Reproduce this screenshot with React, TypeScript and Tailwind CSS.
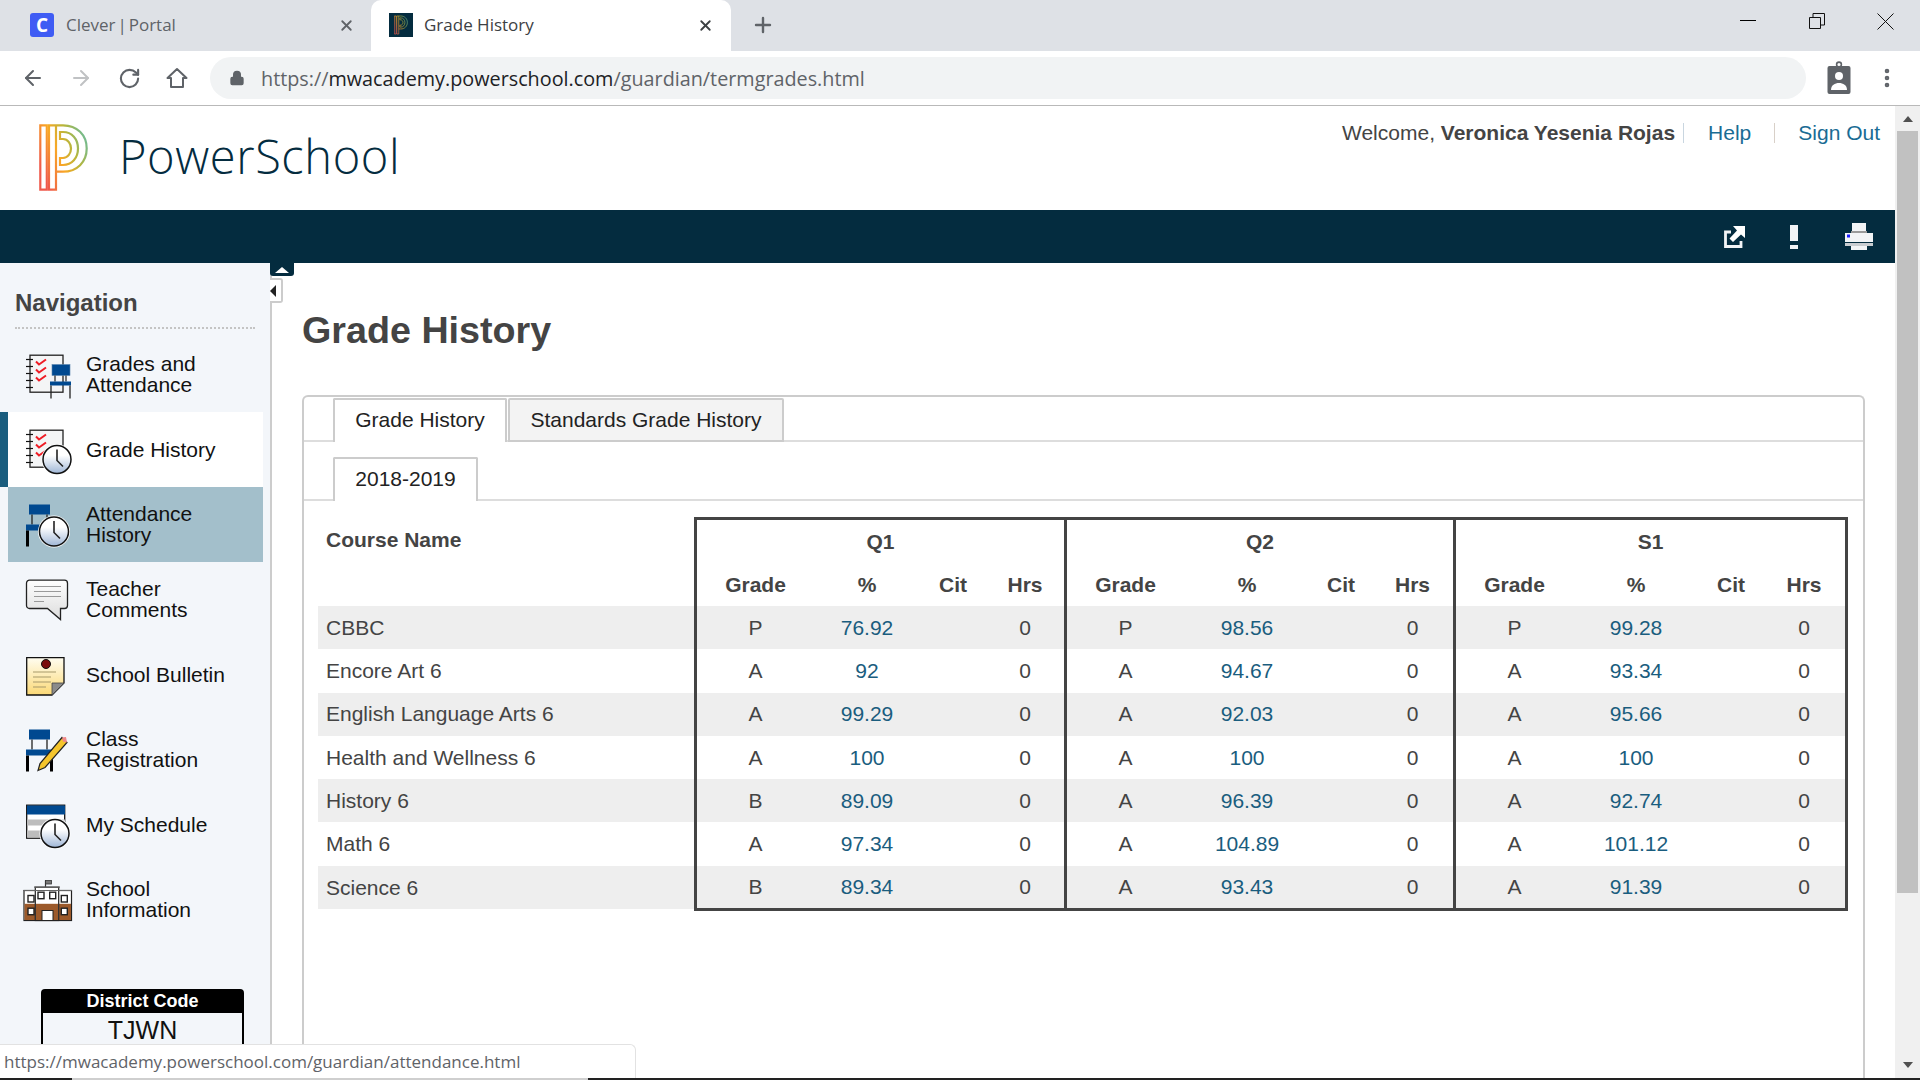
import React from 'react';
import { ArrowLeft, ArrowRight, RotateCw, Lock, X, Plus, EllipsisVertical } from 'lucide-react';

type Row = { name: string; cells: string[][] };

const rows: Row[] = [
  { name: 'CBBC', cells: [['P', '76.92'], ['P', '98.56'], ['P', '99.28']] },
  { name: 'Encore Art 6', cells: [['A', '92'], ['A', '94.67'], ['A', '93.34']] },
  { name: 'English Language Arts 6', cells: [['A', '99.29'], ['A', '92.03'], ['A', '95.66']] },
  { name: 'Health and Wellness 6', cells: [['A', '100'], ['A', '100'], ['A', '100']] },
  { name: 'History 6', cells: [['B', '89.09'], ['A', '96.39'], ['A', '92.74']] },
  { name: 'Math 6', cells: [['A', '97.34'], ['A', '104.89'], ['A', '101.12']] },
  { name: 'Science 6', cells: [['B', '89.34'], ['A', '93.43'], ['A', '91.39']] },
];

const colWidths = [376, 120, 106, 66, 78, 120, 126, 62, 81, 120, 126, 64, 85];

function SvgDefs() {
  return (
    <svg width="0" height="0" className="absolute">
      <defs>
        <linearGradient id="clockFill" x1="0" y1="0" x2="0" y2="1">
          <stop offset="0.35" stopColor="#ffffff" />
          <stop offset="1" stopColor="#9fb6d6" />
        </linearGradient>
        <linearGradient id="noteFill" x1="0" y1="0" x2="0" y2="1">
          <stop offset="0" stopColor="#fffdf0" />
          <stop offset="1" stopColor="#fbd976" />
        </linearGradient>
        <linearGradient id="bubbleFill" x1="0" y1="0" x2="0" y2="1">
          <stop offset="0" stopColor="#ffffff" />
          <stop offset="1" stopColor="#dcdcdc" />
        </linearGradient>
        <linearGradient id="logoFill" gradientUnits="userSpaceOnUse" x1="0" y1="40" x2="50" y2="20">
          <stop offset="0" stopColor="#ef5a4c" />
          <stop offset="0.4" stopColor="#f9a825" />
          <stop offset="0.7" stopColor="#b5b63c" />
          <stop offset="1" stopColor="#6fbb94" />
        </linearGradient>
      </defs>
    </svg>
  );
}

function Clock({ cx, cy, r, halo }: { cx: number; cy: number; r: number; halo?: boolean }) {
  return (
    <g>
      {halo && <circle cx={cx} cy={cy} r={r + 1.5} fill="#fff" />}
      <circle cx={cx} cy={cy} r={r} fill="url(#clockFill)" stroke="#111" strokeWidth="1.5" />
      <path d={`M${cx} ${cy - r + 4} V${cy + 1} L${cx + 6} ${cy + 7}`} fill="none" stroke="#222" strokeWidth="1.6" />
    </g>
  );
}

function Notebook() {
  return (
    <g>
      <rect x="4" y="0.7" width="33" height="37" fill="#f4f5f6" stroke="#222" strokeWidth="1.3" />
      {[5, 12, 19, 26, 33].map(y => (
        <path key={y} d={`M0 ${y}H7`} stroke="#111" strokeWidth="1.2" />
      ))}
      {[7, 15, 23].map(y => (
        <path key={y} d={`M10 ${y}l3 3l7 -5`} fill="none" stroke="#ee1c25" strokeWidth="2" />
      ))}
    </g>
  );
}

function IconBox({ children, dy = 2.5 }: { children: React.ReactNode; dy?: number }) {
  return (
    <svg width="46" height="46" viewBox={`0 ${-dy} 46 46`} className="shrink-0 overflow-visible">
      {children}
    </svg>
  );
}

const navIcons: Record<string, React.ReactNode> = {
  grades: (
    <IconBox>
      <Notebook />
      <rect x="26" y="10" width="18" height="11" fill="#004990" stroke="#5b86ad" strokeWidth="0.6" />
      <path d="M29 21v6M40 21v6" stroke="#222" strokeWidth="1.2" />
      <rect x="24" y="27" width="21" height="4" fill="#004990" />
      <path d="M25 31v13M44 31v13" stroke="#222" strokeWidth="1.3" />
    </IconBox>
  ),
  history: (
    <IconBox>
      <Notebook />
      <Clock cx={31} cy={30} r={14} halo />
    </IconBox>
  ),
  attendance: (
    <IconBox>
      <rect x="3" y="0" width="21" height="10" fill="#004990" />
      <path d="M6 10v10M21 10v10" stroke="#222" strokeWidth="1.3" />
      <rect x="0" y="20" width="24" height="6" fill="#004990" />
      <rect x="0" y="26" width="3" height="16" fill="#000" />
      <Clock cx={28} cy={27} r={14.5} halo />
    </IconBox>
  ),
  comments: (
    <IconBox>
      <path d="M3 0.7H38a3 3 0 0 1 3 3V26a3 3 0 0 1 -3 3H34V40L21 29H3a3 3 0 0 1 -3 -3V3.7a3 3 0 0 1 3 -3Z" fill="url(#bubbleFill)" stroke="#222" strokeWidth="1.3" transform="translate(0.5 0)" />
      <path d="M8 7H35M8 12H35M8 17H35M8 22H18" stroke="#999" strokeWidth="1.2" />
    </IconBox>
  ),
  bulletin: (
    <IconBox dy={5}>
      <path d="M0.7 0.7H38V26L26 38H0.7Z" fill="url(#noteFill)" stroke="#111" strokeWidth="1.3" />
      <path d="M38 26H26V38Z" fill="#8b8b8b" stroke="#444" strokeWidth="0.8" />
      <circle cx="20" cy="7" r="4.5" fill="#7a0d0d" stroke="#111" strokeWidth="1" />
      <path d="M7 15H30M7 20H25M7 25H25M7 30H20" stroke="#a89a6a" strokeWidth="1.2" />
    </IconBox>
  ),
  registration: (
    <IconBox>
      <rect x="3" y="0" width="21" height="10" fill="#004990" />
      <path d="M6 10v10M21 10v10" stroke="#222" strokeWidth="1.3" />
      <rect x="0" y="20" width="27" height="6" fill="#004990" />
      <rect x="0" y="26" width="3" height="16" fill="#000" />
      <rect x="24" y="26" width="3" height="16" fill="#000" />
      <path d="M36 8L41 13L19 38L12 41L14 34Z" fill="#f5c52c" stroke="#222" strokeWidth="1.2" />
      <path d="M36 8L40 7.5L41 13L37 12Z" fill="#f08a8a" />
    </IconBox>
  ),
  schedule: (
    <IconBox>
      <rect x="0.7" y="0.7" width="38" height="33" fill="#fff" stroke="#111" strokeWidth="1.3" />
      <rect x="1" y="1" width="38" height="9" fill="#004990" />
      <rect x="1" y="15" width="38" height="6" fill="#bdbdbd" />
      <rect x="1" y="26" width="38" height="7" fill="#bdbdbd" />
      <Clock cx={29} cy={29} r={14} halo />
    </IconBox>
  ),
  school: (
    <IconBox dy={0}>
      <path d="M19.500 3.500V10" stroke="#333" strokeWidth="1.2" />
      <rect x="19.500" y="3.500" width="6" height="3.500" fill="#777" stroke="#333" strokeWidth="0.8" />
      <rect x="-2" y="13.500" width="47.500" height="30" fill="#fff" stroke="#222" strokeWidth="1.2" />
      <rect x="-1.500" y="26.800" width="46.500" height="16.200" fill="#9c5a2b" />
      <rect x="9.300" y="10.200" width="23.400" height="33.300" fill="#fff" stroke="#222" strokeWidth="1.2" />
      <rect x="10" y="26.800" width="22" height="16.200" fill="#9c5a2b" />
      <path d="M-3 13.500H46M8 10.200H34" stroke="#666" strokeWidth="1.2" />
      {[[12, 15.2], [23.700, 15.2], [2, 18.500], [35.300, 18.500], [2, 31.200], [35.300, 31.200]].map(([x, y]) => (
        <rect key={`${x}-${y}`} x={x} y={y} width="6" height="6.500" fill="#fff" stroke="#222" strokeWidth="1.4" />
      ))}
      <rect x="16" y="33.500" width="11" height="10" fill="#fff" stroke="#222" strokeWidth="1" />
    </IconBox>
  ),
};

function NavItem({ icon, lines, state }: { icon: string; lines: string[]; state?: 'current' | 'hover' }) {
  const tone =
    state === 'current'
      ? 'border-[#1a5d7e] bg-white'
      : state === 'hover'
        ? 'border-transparent bg-[#a3bfcb]'
        : 'border-transparent';
  return (
    <div className={`flex h-[75px] w-[263px] items-center gap-[14px] border-l-[8px] bg-clip-padding pl-[18px] ${tone}`}>
      {navIcons[icon]}
      <div className={`text-[21px] leading-[21px] text-[#111] ${lines.length > 1 ? 'pb-[2px]' : ''}`}>
        {lines.map(l => (
          <div key={l}>{l}</div>
        ))}
      </div>
    </div>
  );
}

function Sidebar() {
  return (
    <aside className="relative h-full w-[272px] shrink-0 border-r-2 border-[#cccccc] bg-[#f3f6fa]">
      <div className="ml-[15px] flex h-[66px] w-[240px] items-end border-b-2 border-dotted border-[#c4c4c4] pb-[10px]">
        <h2 className="text-[24px] leading-[28px] font-bold text-[#444]">Navigation</h2>
      </div>
      <nav className="mt-[8px]">
        <NavItem icon="grades" lines={['Grades and', 'Attendance']} />
        <NavItem icon="history" lines={['Grade History']} state="current" />
        <NavItem icon="attendance" lines={['Attendance', 'History']} state="hover" />
        <NavItem icon="comments" lines={['Teacher', 'Comments']} />
        <NavItem icon="bulletin" lines={['School Bulletin']} />
        <NavItem icon="registration" lines={['Class', 'Registration']} />
        <NavItem icon="schedule" lines={['My Schedule']} />
        <NavItem icon="school" lines={['School', 'Information']} />
      </nav>
      <div className="mt-[52px] ml-[41px] w-[203px] rounded-t-[4px] border-2 border-black">
        <div className="h-[22px] bg-black text-center text-[18px] leading-[21px] font-bold text-white">District Code</div>
        <div className="pt-[2px] text-center text-[25px] leading-[30px] text-[#111]">TJWN</div>
        <div className="h-[30px]" />
      </div>
      {/* collapse handles */}
      <div className="absolute top-0 left-[270px] flex h-[13px] w-[24px] items-center justify-center rounded-b-[3px] bg-[#042c3f]">
        <div className="h-0 w-0 border-x-[7px] border-b-[6px] border-x-transparent border-b-white" />
      </div>
      <div className="absolute top-[15px] left-[270px] flex h-[25px] w-[13px] items-center justify-start rounded-r-[3px] border-2 border-l-0 border-[#cccccc] bg-white">
        <div className="h-0 w-0 border-y-[6px] border-r-[6px] border-y-transparent border-r-[#222]" />
      </div>
    </aside>
  );
}

function GradeTable() {
  const border = 'border-[#444]';
  return (
    <table className="w-[1530px] table-fixed border-separate border-spacing-0 text-[21px] text-[#444]">
      <colgroup>
        {colWidths.map((w, i) => (
          <col key={i} style={{ width: w }} />
        ))}
      </colgroup>
      <thead>
        <tr className="h-[46px]">
          <th rowSpan={2} className="px-2 pt-[10px] text-left align-top leading-[26px] font-bold">Course Name</th>
          <th colSpan={4} className={`border-t-[3px] border-l-[3px] ${border} font-bold`}>Q1</th>
          <th colSpan={4} className={`border-t-[3px] border-l-[3px] ${border} font-bold`}>Q2</th>
          <th colSpan={4} className={`border-t-[3px] border-r-[3px] border-l-[3px] ${border} font-bold`}>S1</th>
        </tr>
        <tr className="h-[43px]">
          {[0, 1, 2].map(g =>
            ['Grade', '%', 'Cit', 'Hrs'].map((h, i) => (
              <th
                key={`${g}-${h}`}
                className={`font-bold ${i === 0 ? `border-l-[3px] ${border}` : ''} ${g === 2 && i === 3 ? `border-r-[3px] ${border}` : ''}`}
              >
                {h}
              </th>
            )),
          )}
        </tr>
      </thead>
      <tbody>
        {rows.map((r, idx) => {
          const last = idx === rows.length - 1;
          const bottom = last ? `border-b-[3px] ${border}` : '';
          const rowBg = idx % 2 === 0 ? 'bg-[#eeeeee]' : '';
          return (
            <tr key={r.name} className={`${last ? 'h-[45.3px]' : 'h-[43.3px]'} ${rowBg}`}>
              <td className={`px-2 ${last ? 'border-b-[2px] border-white' : ''}`}>{r.name}</td>
              {r.cells.map((c, g) => (
                <React.Fragment key={g}>
                  <td className={`border-l-[3px] ${border} ${bottom} text-center`}>{c[0]}</td>
                  <td className={`${bottom} text-center text-[#1a5d7e]`}>{c[1]}</td>
                  <td className={`${bottom}`} />
                  <td className={`${bottom} text-center ${g === 2 ? `border-r-[3px] ${border}` : ''}`}>0</td>
                </React.Fragment>
              ))}
            </tr>
          );
        })}
      </tbody>
    </table>
  );
}

function BrowserTabs() {
  return (
    <div className="flex h-[51px] shrink-0 items-stretch bg-[#dee1e6] text-[17px] text-[#5f6368] [font-family:'Open_Sans',sans-serif]">
      <div className="flex w-[371px] items-center pb-[1px] pl-[30px]">
        <div className="flex h-[24px] w-[24px] items-center justify-center rounded-[3px] bg-[#3f5cf4] text-[19px] font-bold text-white">C</div>
        <span className="ml-[12px] flex-1 [word-spacing:-2.5px]">Clever | Portal</span>
        <X size={17} strokeWidth={2.6} className="mr-[16px] text-[#5f6368]" />
      </div>
      <div className="flex w-[360px] items-center rounded-t-[10px] bg-white pb-[1px] pl-[18px] text-[#3c4043]">
        <div className="flex h-[24px] w-[24px] items-center justify-center bg-[#042c3f]">
          <svg width="14" height="20" viewBox="0 0 50 67">
            <PowerSchoolMark />
          </svg>
        </div>
        <span className="ml-[11px] flex-1">Grade History</span>
        <X size={17} strokeWidth={2.6} className="mr-[17px] text-[#3c4043]" />
      </div>
      <div className="flex w-[64px] items-center justify-center pb-[1px]">
        <Plus size={24} strokeWidth={2.4} className="text-[#5f6368]" />
      </div>
      <div className="flex-1" />
      <div className="flex w-[181px] items-center pb-[9px]">
        <div className="ml-[1px] mb-[2px] h-px w-[16px] bg-black" />
        <svg width="16" height="16" viewBox="0 0 16 16" className="ml-[53px]">
          <path d="M0.5 4.5H11.5V15.500H0.5ZM4 4.500V0.500H15.500V12H11.500" fill="none" stroke="#111" strokeWidth="1" />
        </svg>
        <svg width="17" height="17" viewBox="0 0 17 17" className="ml-[52px]">
          <path d="M0.500 0.500L16.500 16.500M16.500 0.500L0.500 16.500" stroke="#111" strokeWidth="1" />
        </svg>
      </div>
    </div>
  );
}

function Toolbar() {
  return (
    <div className="flex h-[55px] shrink-0 items-center border-b border-[#b9b9b9] bg-white">
      <div className="flex w-[210px] items-center pl-[21px]">
        <ArrowLeft size={24} strokeWidth={2} className="text-[#5f6368]" />
        <ArrowRight size={24} strokeWidth={2} className="ml-[24px] text-[#c0c2c4]" />
        <RotateCw size={23} strokeWidth={2.2} className="ml-[25px] text-[#5f6368]" />
        <svg width="22" height="22" viewBox="0 0 22 22" className="ml-[25px]">
          <path d="M11 2L1.500 11H5V20H17V11H20.500Z" fill="none" stroke="#5f6368" strokeWidth="2" strokeLinejoin="round" />
        </svg>
      </div>
      <div className="flex h-[42px] w-[1596px] items-center rounded-full bg-[#f1f3f4] pl-[19px] text-[19.8px] [font-family:'Open_Sans',sans-serif]">
        <Lock size={16} fill="#5f6368" strokeWidth={2} className="text-[#5f6368]" />
        <div className="ml-[16px] pt-[1px]">
          <span className="text-[#5f6368]">https://</span>
          <span className="text-[#202124]">mwacademy.powerschool.com</span>
          <span className="text-[#5f6368]">/guardian/termgrades.html</span>
        </div>
      </div>
      <svg width="24" height="34" viewBox="0 0 24 34" className="ml-[21px]">
        <circle cx="12" cy="3.500" r="2.400" fill="none" stroke="#5f6368" strokeWidth="1.600" />
        <rect x="0.500" y="5" width="23" height="28" rx="2" fill="#5f6368" />
        <circle cx="12" cy="15" r="4" fill="#fff" />
        <path d="M4 29c0-5 4-7 8-7s8 2 8 7Z" fill="#fff" />
      </svg>
      <EllipsisVertical size={24} strokeWidth={2.6} className="ml-[24px] text-[#5f6368]" />
    </div>
  );
}

function PowerSchoolMark() {
  return (
    <g fill="none" stroke="url(#logoFill)" strokeWidth="2.200">
      <path d="M1.300 1.300H7.800V65.700H1.300Z" />
      <path d="M10 65.700V1.300H24C38 1.300 47.700 11 47.700 24.500C47.700 38 38 47.700 24 47.700H17V65.700ZM17 47.700V1.300" />
      <path d="M21 8H24C33 8 39 15 39 24.500C39 34 33 41 24 41H21V34H24C29 34 32 29 32 24.500C32 20 29 15 24 15H21Z" />
    </g>
  );
}

function PageHeader() {
  return (
    <div className="flex h-[104px] shrink-0 items-start bg-white">
      <svg width="50" height="67" viewBox="0 0 50 67" className="mt-[18px] ml-[39px] shrink-0">
        <PowerSchoolMark />
      </svg>
      <div className="mt-[19px] ml-[30px] text-[47px] leading-[62px] font-light tracking-[0.6px] text-[#042c3f] [font-family:'Open_Sans',sans-serif]">PowerSchool</div>
      <div className="flex-1" />
      <div className="mt-[15px] mr-[15px] flex items-center text-[21px] leading-[24px] text-[#444]">
        <span>
          Welcome, <b>Veronica Yesenia Rojas</b>
        </span>
        <span className="ml-[8px] h-[20px] w-px bg-[#c9d6e0]" />
        <span className="ml-[24px] text-[#1a6c94]">Help</span>
        <span className="ml-[23px] h-[20px] w-px bg-[#d8d0c8]" />
        <span className="ml-[23px] text-[#1a6c94]">Sign Out</span>
      </div>
    </div>
  );
}

function ActionBar() {
  return (
    <div className="flex h-[53px] shrink-0 items-center bg-[#042c3f]">
      <div className="flex-1" />
      <svg width="22" height="22" viewBox="0 0 22 22" className="mr-[43px]">
        <path d="M7 6H1.500V20.500H17V15" fill="none" stroke="#f2f4f6" strokeWidth="2.800" />
        <path d="M9 0H21V12L17 8.500L9 16L5.500 12.500L13 4.500Z" fill="#fff" />
      </svg>
      <svg width="10" height="26" viewBox="0 0 10 26" className="mr-[46px]">
        <path d="M1 1H9V17H1ZM1 21H9V25H1Z" fill="#f2f4f6" />
      </svg>
      <svg width="28" height="28" viewBox="0 0 28 28" className="mr-[22px]">
        <rect x="7" y="0" width="14" height="10" fill="#f2f4f6" />
        <rect x="0" y="10" width="28" height="9" fill="#f2f4f6" />
        <rect x="6" y="8" width="16" height="2" fill="#9a9a9a" />
        <rect x="2" y="11.500" width="3" height="3" fill="#1b1bff" />
        <rect x="0" y="20" width="28" height="3" fill="#c8ccd0" />
        <rect x="6" y="23" width="16" height="4" fill="#f2f4f6" />
      </svg>
    </div>
  );
}

function Scrollbar() {
  return (
    <div className="flex h-full w-[25px] shrink-0 flex-col items-center bg-[#f0f0f0]">
      <div className="flex h-[25px] w-full flex-col items-center">
        <div className="mt-[10px] h-0 w-0 border-x-[5.500px] border-b-[6px] border-x-transparent border-b-[#505050]" />
      </div>
      <div className="h-[762px] w-[21px] bg-[#c1c1c1]" />
      <div className="flex-1" />
      <div className="mb-[10px] h-0 w-0 border-x-[5.500px] border-t-[6px] border-x-transparent border-t-[#505050]" />
    </div>
  );
}

export default function App() {
  return (
    <div className="relative flex h-screen w-screen flex-col overflow-hidden bg-white text-[#444] [font-family:'Liberation_Sans',Arial,sans-serif]">
      <SvgDefs />
      <BrowserTabs />
      <Toolbar />
      <div className="flex min-h-0 flex-1">
        <div className="flex min-w-0 flex-1 flex-col overflow-hidden">
          <PageHeader />
          <ActionBar />
          <div className="flex min-h-0 flex-1">
            <Sidebar />
            <main className="flex min-w-0 flex-1 flex-col pr-[30px] pl-[30px]">
              <h1 className="mt-[44px] h-[88px] text-[37.7px] leading-[46px] font-bold text-[#444]">Grade History</h1>
              <section className="flex-1 rounded-t-[6px] border-x-2 border-t-2 border-[#cccccc] pb-4">
                <div className="flex h-[45px] items-end border-b-2 border-[#dddddd] pl-[29px]">
                  <div className="-mb-[2px] flex h-[44px] w-[174px] items-center justify-center rounded-t-[2px] border-2 border-b-0 border-[#cccccc] bg-white pb-[2px] text-[21px] text-[#222]">Grade History</div>
                  <div className="-mb-[2px] ml-[1px] flex h-[44px] w-[276px] items-center justify-center rounded-t-[2px] border-2 border-[#cccccc] bg-[#f3f3f3] text-[21px] text-[#222]">Standards Grade History</div>
                </div>
                <div className="flex h-[59px] items-end border-b-2 border-[#dddddd] pl-[29px]">
                  <div className="-mb-[2px] flex h-[44px] w-[145px] items-center justify-center rounded-t-[2px] border-2 border-b-0 border-[#cccccc] bg-white pb-[2px] text-[21px] text-[#222]">2018-2019</div>
                </div>
                <div className="mt-[16px] pl-[14px]">
                  <GradeTable />
                </div>
              </section>
            </main>
          </div>
        </div>
        <Scrollbar />
      </div>
      <div className="flex h-[2px] shrink-0 bg-[#222]">
        <div className="w-[72px]" />
        <div className="w-[516px] bg-[#cfcfcf]" />
      </div>
      {/* link preview bubble */}
      <div className="absolute bottom-[2px] left-0 flex h-[34px] w-[636px] items-center rounded-tr-[6px] border-t border-r border-[#e2e2e2] bg-white pl-[4px] text-[17px] text-[#5f6368] [font-family:'Open_Sans',sans-serif]">
        https://mwacademy.powerschool.com/guardian/attendance.html
      </div>
    </div>
  );
}
